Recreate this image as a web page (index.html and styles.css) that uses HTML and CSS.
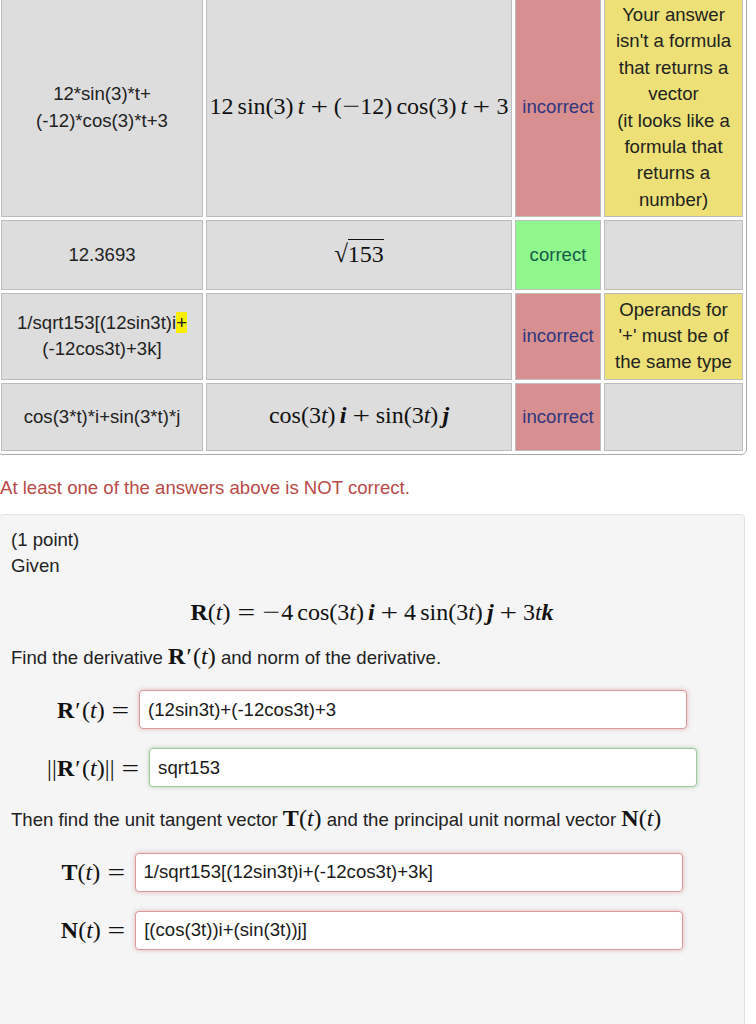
FILE: index.html
```html
<!DOCTYPE html>
<html>
<head>
<meta charset="utf-8">
<link rel="stylesheet" href="styles.css">
</head>
<body>
<table class="results">
  <tr>
    <td class="c1">12*sin(3)*t+<br>(-12)*cos(3)*t+3</td>
    <td class="c2 mcell"><span class="m">12<span class="fn">sin</span>(3)<span class="th"></span><i>t</i><span class="op">+</span>(<span class="un">−</span>12)<span class="fn">cos</span>(3)<span class="th"></span><i>t</i><span class="op">+</span>3</span></td>
    <td class="c3 bad">incorrect</td>
    <td class="c4 msgcell">Your answer isn't a formula that returns a vector<br>(it looks like a formula that returns a number)</td>
  </tr>
  <tr>
    <td class="c1">12.3693</td>
    <td class="c2 mcell"><span class="m"><span class="rad">√</span><span class="under">153</span></span></td>
    <td class="c3 good">correct</td>
    <td class="c4"></td>
  </tr>
  <tr>
    <td class="c1">1/sqrt153[(12sin3t)i<span class="hl">+</span><br>(-12cos3t)+3k]</td>
    <td class="c2 mcell"></td>
    <td class="c3 bad">incorrect</td>
    <td class="c4 msgcell">Operands for '+' must be of the same type</td>
  </tr>
  <tr>
    <td class="c1">cos(3*t)*i+sin(3*t)*j</td>
    <td class="c2 mcell"><span class="m">cos(3<i>t</i>)<span class="th"></span><b><i>i</i></b><span class="op">+</span>sin(3<i>t</i>)<span class="th"></span><b><i>j</i></b></span></td>
    <td class="c3 bad">incorrect</td>
    <td class="c4"></td>
  </tr>
</table>

<div class="warn">At least one of the answers above is NOT correct.</div>

<div class="problem">
  <div>(1 point)</div>
  <div>Given</div>
  <div class="body">
    <div class="display"><span class="m"><b>R</b>(<i>t</i>)<span class="rel">=</span><span class="un">−</span>4<span class="fn">cos</span>(3<i>t</i>)<span class="th"></span><b><i>i</i></b><span class="op">+</span>4<span class="fn">sin</span>(3<i>t</i>)<span class="th"></span><b><i>j</i></b><span class="op">+</span>3<i>t</i><b><i>k</i></b></span></div>
    <div>Find the derivative <span class="m"><b>R</b><span class="pr">′</span>(<i>t</i>)</span> and norm of the derivative.</div>
    <div class="row"><span class="m"><b>R</b><span class="pr">′</span>(<i>t</i>)<span class="rel">=</span></span><input class="ans wrong" type="text" value="(12sin3t)+(-12cos3t)+3"></div>
    <div class="row"><span class="m"><span class="bars">||</span><b>R</b><span class="pr">′</span>(<i>t</i>)<span class="bars">||</span><span class="rel">=</span></span><input class="ans right" type="text" value="sqrt153"></div>
    <div>Then find the unit tangent vector <span class="m"><b>T</b>(<i>t</i>)</span> and the principal unit normal vector <span class="m"><b>N</b>(<i>t</i>)</span></div>
    <div class="row"><span class="m"><b>T</b>(<i>t</i>)<span class="rel">=</span></span><input class="ans wrong" type="text" value="1/sqrt153[(12sin3t)i+(-12cos3t)+3k]"></div>
    <div class="row"><span class="m"><b>N</b>(<i>t</i>)<span class="rel">=</span></span><input class="ans wrong" type="text" value="[(cos(3t))i+(sin(3t))j]"></div>
  </div>
</div>
</body>
</html>
```

FILE: styles.css
```css
html, body {
  margin: 0;
  padding: 0;
  background: #fff;
}
body {
  font-family: "Liberation Sans", Arial, sans-serif;
  font-size: 18.6px;
  line-height: 26.4px;
  color: #222;
  width: 756px;
  height: 1024px;
  overflow: hidden;
}
.results {
  border-collapse: separate;
  border-spacing: 3px;
  border: 1px solid #a9a9a9;
  border-radius: 0 0 6px 6px;
  margin: -6px 0 0 -3px;
  background: #fff;
}
.results td {
  box-sizing: border-box;
  background: #dddddd;
  border: 1px solid #bdbdbd;
  padding: 3px 4px;
  text-align: center;
  vertical-align: middle;
}
.results td.c1 { width: 202px; }
.results td.c2 { width: 306px; }
.results td.c3 { width: 86px; padding: 3px 1px; }
.results td.c4 { width: 139px; padding: 3px 8px; }
.results td.mcell { padding: 19.5px 1px; }
.results td.bad { background: #d78f8f; color: #2f3580; }
.results td.good { background: #8ff78c; color: #145a48; }
.results td.msgcell { background: #ece076; }
.hl { background: #f6f000; }

.m {
  font-family: "Liberation Serif", "Times New Roman", serif;
  font-size: 24px;
  line-height: 1;
  white-space: nowrap;
  color: #111;
}
.m i { font-style: italic; }
.m b { font-weight: bold; }
.fn { margin-left: 0.17em; }
.th { display: inline-block; width: 0.17em; }
.pr { display: inline-block; margin: 0 0.06em 0 0.04em; }
.op, .rel, .un {
  display: inline-block;
  width: 0.78em;
  text-align: center;
  transform: scaleX(1.3);
}
.op { margin: 0 0.222em; }
.rel { margin: 0 0.278em; }
.row .rel { margin-right: 0; }
.bars { letter-spacing: 0.01em; }
.rad { font-size: 25px; line-height: 1; }
.under { border-top: 1px solid #111; padding-top: 1px; }

.warn {
  color: #b94a48;
  margin: 20px 0 12px 0;
}

.problem {
  box-sizing: border-box;
  width: 746px;
  margin-left: -1px;
  min-height: 600px;
  background: #f5f5f5;
  border: 1px solid #e3e3e3;
  border-radius: 4px;
  padding: 12px 11px 11px 11px;
}
.body {
  display: flex;
  flex-direction: column;
  gap: 19px;
  margin-top: 20px;
}
.display {
  text-align: center;
  margin-bottom: -2px;
}
.row {
  display: flex;
  justify-content: center;
  align-items: center;
  gap: 9px;
  height: 39px;
}
.ans {
  box-sizing: border-box;
  width: 548px;
  height: 39px;
  margin: 0;
  padding: 0 8px;
  background: #fff;
  border-radius: 4px;
  font-family: "Liberation Sans", Arial, sans-serif;
  font-size: 18.6px;
  color: #1a1a1a;
  outline: none;
}
.ans.wrong {
  border: 1px solid #d99b9b;
  box-shadow: 0 0 5px rgba(200, 80, 80, 0.4);
}
.ans.right {
  border: 1px solid #9cc99c;
  box-shadow: 0 0 5px rgba(80, 160, 80, 0.4);
}
```
